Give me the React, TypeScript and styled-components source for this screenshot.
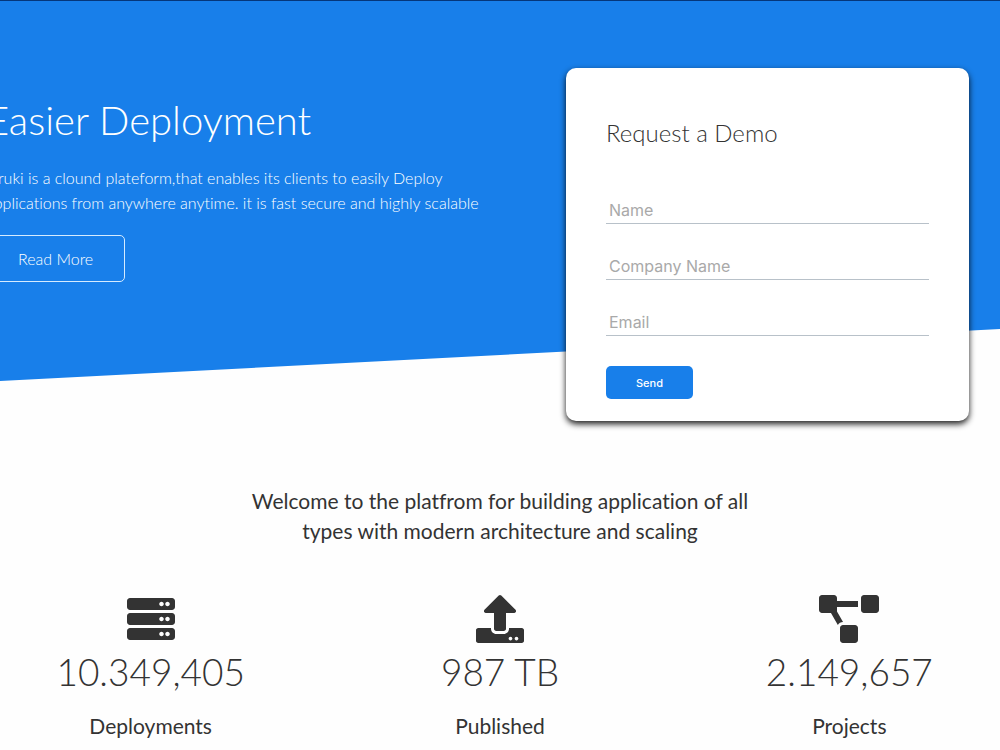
import React from "react";
import styled, { createGlobalStyle } from "styled-components";
import { FaProjectDiagram, FaServer, FaUpload } from "react-icons/fa";

const GlobalStyle = createGlobalStyle`
  *, *::before, *::after { box-sizing: border-box; }
  body {
    margin: 0;
    overflow-x: hidden;
    background: #fefefe;
    color: #333;
    font-family: Lato, "Liberation Sans", sans-serif;
    font-variant-ligatures: none;
  }
  h1, h2, h3, p { margin: 0; }
`;

const Page = styled.div`
  overflow: hidden;
`;

const Showcase = styled.header`
  position: relative;
  border-top: 1px solid #05367a;
  padding: 67px 31px 0 0;
  display: grid;
  grid-template-columns: minmax(0, 1fr) 403px;
  column-gap: 48px;
  align-items: start;
`;

const Backdrop = styled.div`
  position: absolute;
  inset: 0 0 40px;
  z-index: -1;
  background: #187fea;
  clip-path: polygon(0 0, 100% 0, 100% calc(100% - 52px), 0 100%);
`;

const Intro = styled.section`
  margin-left: -14px;
  padding-top: 28px;
  color: #fff;
  font-weight: 300;
`;

const Title = styled.h1`
  font-size: 40px;
  line-height: 48px;
  font-weight: 300;
`;

const Lead = styled.p`
  margin: 21px 0 20px;
  font-size: 16px;
  line-height: 25px;
  white-space: nowrap;
`;

const OutlineButton = styled.button`
  display: block;
  height: 47px;
  padding: 0 31px;
  border: 1px solid #d5ebff;
  border-radius: 5px;
  background: transparent;
  color: #fff;
  font: 300 16px/24px Lato, sans-serif;
`;

const Card = styled.form`
  padding: 40px 40px 22px;
  border-radius: 10px;
  background: #fff;
  box-shadow: 0 3px 6px rgba(0, 0, 0, 0.9);
`;

const CardTitle = styled.h2`
  margin: 10px 0 45px;
  font-size: 24px;
  line-height: 30px;
  font-weight: 300;
`;

const Field = styled.input`
  display: block;
  width: 100%;
  height: 31px;
  margin-bottom: 25px;
  padding: 7px 3px 3px;
  border: 0;
  border-bottom: 1px solid #b8c1c9;
  background: transparent;
  color: #333;
  font: 400 16px/20px Inter, sans-serif;
  outline: none;
  &::placeholder { color: #a9a9a9; opacity: 1; }
`;

const SendButton = styled.button`
  display: block;
  margin-top: 30px;
  height: 33px;
  padding: 0 30px;
  border: 0;
  border-radius: 5px;
  background: #187fea;
  color: #fff;
  font: 500 11px/16px Inter, sans-serif;
`;

const Stats = styled.section`
  padding: 65px 0 10px;
  text-align: center;
`;

const Welcome = styled.h3`
  max-width: 504px;
  margin: 0 auto 49px;
  font-size: 21px;
  line-height: 30px;
  font-weight: 400;
`;

const StatGrid = styled.div`
  display: grid;
  grid-template-columns: repeat(3, 1fr);
  column-gap: 48px;
`;

const Stat = styled.div`
  svg { display: block; margin: 0 auto 5px; height: 48px; width: 60px; }
`;

const Figure = styled.p`
  font-size: 37px;
  line-height: 48px;
  font-weight: 300;
`;

const Caption = styled.p`
  margin-top: 16px;
  font-size: 21px;
  line-height: 28px;
`;

const stats = [
  { icon: FaServer, figure: "10.349,405", caption: "Deployments" },
  { icon: FaUpload, figure: "987 TB", caption: "Published" },
  { icon: FaProjectDiagram, figure: "2.149,657", caption: "Projects" },
];

const fields = [
  { name: "name", type: "text", label: "Name" },
  { name: "company", type: "text", label: "Company Name" },
  { name: "email", type: "email", label: "Email" },
];

export default function App() {
  return (
    <Page>
      <GlobalStyle />
      <Showcase>
        <Backdrop />
        <Intro>
          <Title>Easier Deployment</Title>
          <Lead>
            Druki is a clound plateform,that enables its clients to easily Deploy
            <br />
            applications from anywhere anytime. it is fast secure and highly scalable
          </Lead>
          <OutlineButton type="button">Read More</OutlineButton>
        </Intro>
        <Card onSubmit={(event) => event.preventDefault()}>
          <CardTitle>Request a Demo</CardTitle>
          {fields.map((field) => (
            <Field
              key={field.name}
              name={field.name}
              type={field.type}
              placeholder={field.label}
              aria-label={field.label}
            />
          ))}
          <SendButton type="submit">Send</SendButton>
        </Card>
      </Showcase>
      <Stats>
        <Welcome>
          Welcome to the platfrom for building application of all types with modern
          architecture and scaling
        </Welcome>
        <StatGrid>
          {stats.map(({ icon: Icon, figure, caption }) => (
            <Stat key={caption}>
              <Icon aria-hidden="true" />
              <Figure>{figure}</Figure>
              <Caption>{caption}</Caption>
            </Stat>
          ))}
        </StatGrid>
      </Stats>
    </Page>
  );
}
